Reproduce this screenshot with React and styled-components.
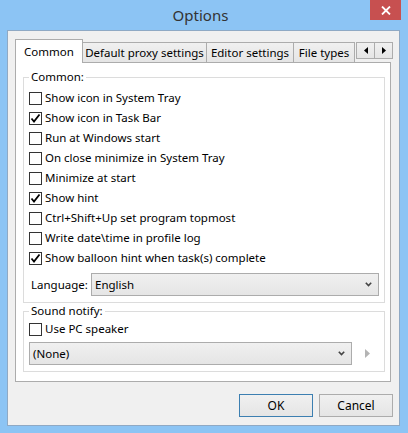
import React from "react";
import styled, { createGlobalStyle } from "styled-components";

const GlobalStyle = createGlobalStyle`
  body {
    margin: 0;
    font-family: "Noto Sans", "Open Sans", sans-serif;
    font-size: 11.5px;
    color: #000;
  }
`;

const commonOptions = [
  { label: "Show icon in System Tray", checked: false },
  { label: "Show icon in Task Bar", checked: true },
  { label: "Run at Windows start", checked: false },
  { label: "On close minimize in System Tray", checked: false },
  { label: "Minimize at start", checked: false },
  { label: "Show hint", checked: true },
  { label: "Ctrl+Shift+Up set program topmost", checked: false },
  { label: "Write date\\time in profile log", checked: false },
  { label: "Show balloon hint when task(s) complete", checked: true },
];

const tabs = [
  { label: "Common", width: 68, active: true },
  { label: "Default proxy settings", width: 125 },
  { label: "Editor settings", width: 88 },
  { label: "File types", width: 62 },
];

/* ---------- window frame ---------- */
const Window = styled.div`
  width: 408px;
  height: 433px;
  background: #8cc4f4;
  display: flex;
  flex-direction: column;
  box-sizing: border-box;
`;

const TitleBar = styled.div`
  height: 30px;
  display: grid;
  grid-template-columns: 1fr auto 1fr;
  padding-right: 7px;
`;

const Title = styled.div`
  grid-column: 2;
  font-size: 15px;
  line-height: 30px;
  color: #333;
`;

const CloseButton = styled.div`
  grid-column: 3;
  justify-self: end;
  width: 31px;
  height: 20px;
  background: #c75050;
  display: flex;
  align-items: center;
  justify-content: center;
`;

const Client = styled.div`
  flex: 1;
  margin: 0 8px 7px 7px;
  border: 1px solid #8fa9c4;
  background: #f0f0f0;
  padding: 8px 8px 8px 7px;
  display: flex;
  flex-direction: column;
`;

/* ---------- tabs ---------- */
const TabRow = styled.div`
  height: 23px;
  display: flex;
  align-items: flex-end;
`;

const Tab = styled.div`
  box-sizing: border-box;
  width: ${(p) => p.$width}px;
  height: ${(p) => (p.$active ? 24 : 20)}px;
  margin-bottom: ${(p) => (p.$active ? -1 : 0)}px;
  margin-left: ${(p) => (p.$first ? 0 : -1)}px;
  border: 1px solid #acacac;
  border-bottom: none;
  background: ${(p) =>
    p.$active ? "#fff" : "linear-gradient(#f0f0f0, #e5e5e5)"};
  position: relative;
  z-index: ${(p) => (p.$active ? 2 : 1)};
  text-align: center;
  line-height: ${(p) => (p.$active ? 24 : 19)}px;
  white-space: nowrap;
`;

const ScrollButtons = styled.div`
  margin-left: auto;
  margin-right: -2px;
  align-self: flex-start;
  margin-top: 3px;
  display: flex;
`;

const ScrollButton = styled.div`
  box-sizing: border-box;
  width: ${(p) => p.$width}px;
  height: 17px;
  margin-left: -1px;
  border: 1px solid #acacac;
  background: linear-gradient(#f0f0f0, #e5e5e5);
  display: flex;
  align-items: center;
  justify-content: center;
`;

const Panel = styled.div`
  height: 320px;
  box-sizing: border-box;
  border: 1px solid #acacac;
  background: #fff;
  padding: 6px 5px 7px 7px;
  display: flex;
  flex-direction: column;
`;

/* ---------- groups ---------- */
const Group = styled.fieldset`
  margin: 0;
  min-width: 0;
  border: 1px solid #dcdcdc;
  padding: ${(p) => p.$padTop}px 5px 6px 5px;
`;

const Legend = styled.legend`
  padding: 0 2px;
  line-height: 16px;
`;

const CheckRow = styled.label`
  display: flex;
  align-items: flex-start;
  height: 20px;
  line-height: 18px;
  white-space: nowrap;
`;

const Box = styled.span`
  box-sizing: border-box;
  width: 13px;
  height: 13px;
  margin-top: 3px;
  margin-right: 3px;
  border: 1px solid #333;
  background: #fff;
  display: flex;
  align-items: center;
  justify-content: center;
`;

const LanguageRow = styled.div`
  display: flex;
  align-items: center;
  margin-top: 4px;
`;

const FieldLabel = styled.span`
  width: 60px;
  padding-left: 2px;
`;

const Select = styled.div`
  box-sizing: border-box;
  height: 23px;
  ${(p) => (p.$width ? `width: ${p.$width}px;` : "flex: 1;")}
  border: 1px solid #acacac;
  background: linear-gradient(#f0f0f0, #e5e5e5);
  display: flex;
  align-items: center;
  justify-content: space-between;
  padding: 0 6px 0 3px;
`;

const SoundRow = styled.div`
  display: flex;
  align-items: center;
  margin-top: 2px;
`;

const PlayArrow = styled.span`
  margin-left: 13px;
  display: flex;
`;

/* ---------- bottom buttons ---------- */
const ButtonRow = styled.div`
  margin-top: 12px;
  margin-right: -2px;
  display: flex;
  justify-content: flex-end;
  gap: 6px;
`;

const Button = styled.button`
  width: 74px;
  height: 23px;
  box-sizing: border-box;
  border: 1px solid ${(p) => (p.$default ? "#3c7fb1" : "#acacac")};
  background: linear-gradient(#f0f0f0, #e5e5e5);
  font-family: inherit;
  font-size: 12px;
  color: #000;
  padding: 0;
`;

const Check = () => (
  <svg width="11" height="11" viewBox="0 0 11 11">
    <path d="M1.5 5.5 L4 8.5 L9.5 1.5" fill="none" stroke="#000" strokeWidth="1.8" />
  </svg>
);

const Chevron = () => (
  <svg width="7" height="5" viewBox="0 0 7 5">
    <path d="M0.8 0.8 L3.5 3.6 L6.2 0.8" fill="none" stroke="#444" strokeWidth="1.6" />
  </svg>
);

const Checkbox = ({ label, checked }) => (
  <CheckRow>
    <Box>{checked && <Check />}</Box>
    {label}
  </CheckRow>
);

export default function App() {
  return (
    <>
      <GlobalStyle />
      <Window>
        <TitleBar>
          <Title>Options</Title>
          <CloseButton>
            <svg width="10" height="9" viewBox="0 0 10 9">
              <path d="M1 0.5 L9 8.5 M9 0.5 L1 8.5" stroke="#fff" strokeWidth="1.8" />
            </svg>
          </CloseButton>
        </TitleBar>

        <Client>
          <TabRow>
            {tabs.map((t, i) => (
              <Tab key={t.label} $width={t.width} $active={t.active} $first={i === 0}>
                {t.label}
              </Tab>
            ))}
            <ScrollButtons>
              <ScrollButton $width={19}>
                <svg width="4" height="7" viewBox="0 0 4 7">
                  <path d="M4 0 L0 3.5 L4 7 Z" fill="#000" />
                </svg>
              </ScrollButton>
              <ScrollButton $width={19}>
                <svg width="4" height="7" viewBox="0 0 4 7">
                  <path d="M0 0 L4 3.5 L0 7 Z" fill="#000" />
                </svg>
              </ScrollButton>
            </ScrollButtons>
          </TabRow>

          <Panel>
            <Group $padTop={4}>
              <Legend>Common:</Legend>
              {commonOptions.map((o) => (
                <Checkbox key={o.label} label={o.label} checked={o.checked} />
              ))}
              <LanguageRow>
                <FieldLabel>Language:</FieldLabel>
                <Select>
                  <span>English</span>
                  <Chevron />
                </Select>
              </LanguageRow>
            </Group>

            <Group $padTop={1}>
              <Legend>Sound notify:</Legend>
              <Checkbox label="Use PC speaker" checked={false} />
              <SoundRow>
                <Select $width={323}>
                  <span>(None)</span>
                  <Chevron />
                </Select>
                <PlayArrow>
                  <svg width="5" height="9" viewBox="0 0 5 9">
                    <path d="M0 0 L5 4.5 L0 9 Z" fill="#b4b4b4" />
                  </svg>
                </PlayArrow>
              </SoundRow>
            </Group>
          </Panel>

          <ButtonRow>
            <Button $default>OK</Button>
            <Button>Cancel</Button>
          </ButtonRow>
        </Client>
      </Window>
    </>
  );
}
